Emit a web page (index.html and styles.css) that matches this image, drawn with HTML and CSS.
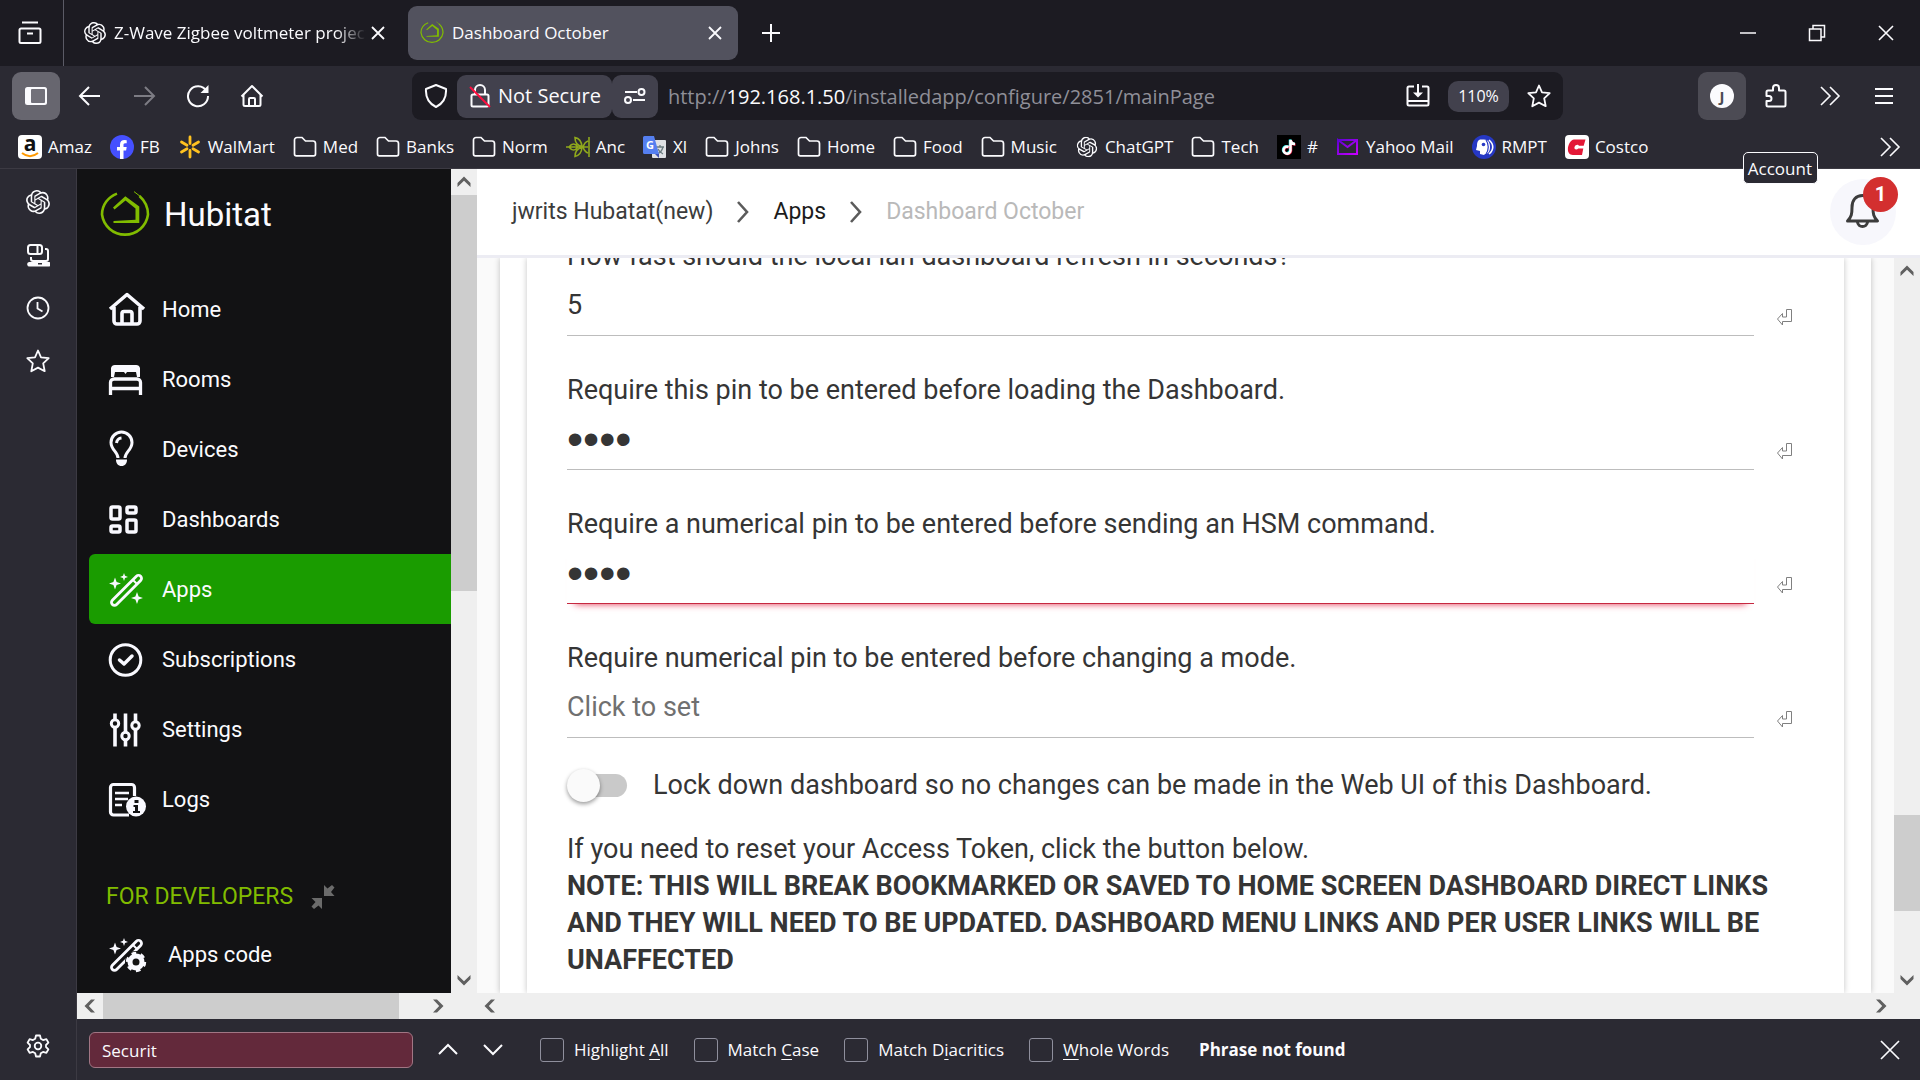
FILE: index.html
```html
<!DOCTYPE html>
<html lang="en">
<head>
<meta charset="utf-8">
<title>Dashboard October</title>
<link rel="stylesheet" href="styles.css">
</head>
<body>
<svg class="sprite" aria-hidden="true">
  <symbol id="gpt" viewBox="0 0 24 24"><path fill="currentColor" d="M22.2819 9.8211a5.9847 5.9847 0 0 0-.5157-4.9108 6.0462 6.0462 0 0 0-6.5098-2.9A6.0651 6.0651 0 0 0 4.9807 4.1818a5.9847 5.9847 0 0 0-3.9977 2.9 6.0462 6.0462 0 0 0 .7427 7.0966 5.98 5.98 0 0 0 .511 4.9107 6.051 6.051 0 0 0 6.5146 2.9001A5.9847 5.9847 0 0 0 13.2599 24a6.0557 6.0557 0 0 0 5.7718-4.2058 5.9894 5.9894 0 0 0 3.9977-2.9001 6.0557 6.0557 0 0 0-.7475-7.0729zm-9.022 12.6081a4.4755 4.4755 0 0 1-2.8764-1.0408l.1419-.0804 4.7783-2.7582a.7948.7948 0 0 0 .3927-.6813v-6.7369l2.02 1.1686a.071.071 0 0 1 .038.052v5.5826a4.504 4.504 0 0 1-4.4945 4.4944zm-9.6607-4.1254a4.4708 4.4708 0 0 1-.5346-3.0137l.142.0852 4.783 2.7582a.7712.7712 0 0 0 .7806 0l5.8428-3.3685v2.3324a.0804.0804 0 0 1-.0332.0615L9.74 19.9502a4.4992 4.4992 0 0 1-6.1408-1.6464zM2.3408 7.8956a4.485 4.485 0 0 1 2.3655-1.9728V11.6a.7664.7664 0 0 0 .3879.6765l5.8144 3.3543-2.0201 1.1685a.0757.0757 0 0 1-.071 0l-4.8303-2.7865A4.504 4.504 0 0 1 2.3408 7.872zm16.5963 3.8558L13.1038 8.364 15.1192 7.2a.0757.0757 0 0 1 .071 0l4.8303 2.7913a4.4944 4.4944 0 0 1-.6765 8.1042v-5.6772a.79.79 0 0 0-.407-.667zm2.0107-3.0231l-.142-.0852-4.7735-2.7818a.7759.7759 0 0 0-.7854 0L9.409 9.2297V6.8974a.0662.0662 0 0 1 .0284-.0615l4.8303-2.7866a4.4992 4.4992 0 0 1 6.6802 4.66zM8.3065 12.863l-2.02-1.1638a.0804.0804 0 0 1-.038-.0567V6.0742a4.4992 4.4992 0 0 1 7.3757-3.4537l-.142.0805L8.704 5.459a.7948.7948 0 0 0-.3927.6813zm1.0976-2.3654l2.602-1.4998 2.6069 1.4998v2.9994l-2.5974 1.4997-2.6067-1.4997Z"/></symbol>
  <symbol id="hub" viewBox="0 0 50 50"><path class="ln" stroke-width="2.6" d="M17 3.6C8 7 2 15 2 24.500a23.200 23.200 0 0 0 46 0c0-8-3.500-14-8.500-18.500"/><path class="ln" stroke-width="1" d="M34 1.600l6 4.600"/><path fill="currentColor" d="M13 17.500 25.300 6.200l14 10.200V33H13.500v-2l22-1.200V18.500L25.500 10.600 14.500 19.500z"/></symbol>
  <symbol id="folder" viewBox="0 0 24 24"><path class="ln" stroke-width="1.7" d="M1.500 19V5a2.500 2.500 0 0 1 2.500-2.500h5L12.500 6H20a2.500 2.500 0 0 1 2.500 2.500V19a1.800 1.800 0 0 1-1.800 1.800H3.300A1.800 1.800 0 0 1 1.500 19z"/></symbol>
  <symbol id="x" viewBox="0 0 24 24"><path class="ln" stroke-width="1.8" d="m6 6 12 12M18 6 6 18"/></symbol>
  <symbol id="star" viewBox="0 0 24 24"><path class="ln" stroke-width="1.800" stroke-linejoin="round" d="M12 1.500 15 8.300l7.700.8-5.500 5.200 1.500 7.900L12 18.600l-6.700 3.600 1.500-7.900L1.300 9.100 9 8.300z"/></symbol>
  <symbol id="more" viewBox="0 0 24 24"><path class="ln" stroke-width="1.600" d="m3 3 9 9-9 9M12 3l9 9-9 9"/></symbol>
  <symbol id="up" viewBox="0 0 26 26"><path fill="currentColor" d="M13 7.500 19.500 14v4L13 11.800 6.500 18v-4z"/></symbol>
  <symbol id="enter" viewBox="0 0 18 20"><path class="ln" stroke-width="1" d="M10.500 2.500h5v12h-9V18L1.500 12l5-5.500v3.500h4z"/></symbol>
  <symbol id="crumb" viewBox="0 0 14 24"><path class="ln" stroke-width="2.600" d="m2 2 9 10-9 10"/></symbol>
  <symbol id="wand" viewBox="0 0 42 42"><rect class="ln" stroke-width="2.800" x="-.5" y="18.300" width="40" height="6" rx="3" transform="rotate(-45 19.500 21.300)"/><path class="ln" stroke-width="2" d="m25.500 10.500 5 5"/><path fill="currentColor" d="M8 8.500l1.600 4.400L14 14.500l-4.400 1.600L8 20.500l-1.600-4.400L2 14.500l4.400-1.600zM17 4l1 2.800L21 8l-3 1-1 3-1-3-3-1 3-1.200z"/></symbol>
</svg>

<header class="chrome">
  <div class="tabs">
    <button class="tab-list" aria-label="View"><svg class="i24" viewBox="0 0 24 24"><path class="ln" stroke-width="2" d="M4 1.500h16M3 7.500h18a1.500 1.500 0 0 1 1.500 1.500v11.500A1.500 1.500 0 0 1 21 22H3a1.500 1.500 0 0 1-1.500-1.500V9A1.500 1.500 0 0 1 3 7.500zM9 12.500h6"/></svg></button>
    <div class="tab"><svg class="i22"><use href="#gpt"/></svg><span class="tab-title fade">Z-Wave Zigbee voltmeter project</span><button class="tab-close" aria-label="Close"><svg class="i24"><use href="#x"/></svg></button></div>
    <div class="tab active"><svg class="i24 green"><use href="#hub"/></svg><span class="tab-title">Dashboard October</span><button class="tab-close" aria-label="Close"><svg class="i24"><use href="#x"/></svg></button></div>
    <button class="new-tab" aria-label="New tab"><svg class="i24" viewBox="0 0 24 24"><path class="ln" stroke-width="2" d="M12 3v18M3 12h18"/></svg></button>
    <div class="window-buttons">
      <button aria-label="Minimize"><svg class="i24" viewBox="0 0 24 24"><path class="ln" stroke-width="1.500" d="M4 12h16"/></svg></button>
      <button aria-label="Restore"><svg class="i24" viewBox="0 0 24 24"><path class="ln" stroke-width="1.500" d="M4.500 8h11.500v11.500H4.500zM8 8V4.500h11.500V16H16"/></svg></button>
      <button aria-label="Close window"><svg class="i24" viewBox="0 0 24 24"><path class="ln" stroke-width="1.600" d="m5 5 14 14M19 5 5 19"/></svg></button>
    </div>
  </div>

  <nav class="toolbar">
    <button class="tool pressed" aria-label="Sidebar"><svg class="i24" viewBox="0 0 24 24"><rect x="1" y="3" width="22" height="18" rx="2.500" fill="#fbfbfe"/><rect x="7" y="5" width="14" height="14" rx="1" fill="#72717a"/></svg></button>
    <button class="tool" aria-label="Back"><svg class="i24" viewBox="0 0 24 24"><path class="ln" stroke-width="2" d="M22 12H2m9-9-9 9 9 9"/></svg></button>
    <button class="tool dim" aria-label="Forward"><svg class="i24" viewBox="0 0 24 24"><path class="ln" stroke-width="2" d="M2 12h20m-9-9 9 9-9 9"/></svg></button>
    <button class="tool" aria-label="Reload"><svg class="i24" viewBox="0 0 24 24"><path class="ln" stroke-width="2" d="M20.500 7A10 10 0 1 0 22 12"/><path fill="currentColor" d="M22.500 1v8h-8z"/></svg></button>
    <button class="tool" aria-label="Home"><svg class="i24" viewBox="0 0 24 24"><path class="ln" stroke-width="2" stroke-linejoin="round" d="M1.500 12.500 12 2l10.500 10.500M3.500 11v9.500A1.500 1.500 0 0 0 5 22h14a1.500 1.500 0 0 0 1.500-1.500V11M9 22v-7a1 1 0 0 1 1-1h4a1 1 0 0 1 1 1v7"/></svg></button>
    <div class="urlbar">
      <button class="shield" aria-label="Protections"><svg class="i24" viewBox="0 0 24 24"><path class="ln" stroke-width="2" stroke-linejoin="round" d="M12 1 22 5c.5 7-2 14-10 18C4 19 1.500 12 2 5z"/></svg></button>
      <button class="chip"><svg class="i24" viewBox="0 0 24 24"><path class="ln" stroke-width="2" d="M5 10.500h14a1.500 1.500 0 0 1 1.500 1.500v9a1.500 1.500 0 0 1-1.500 1.500H5A1.500 1.500 0 0 1 3.500 21v-9A1.500 1.500 0 0 1 5 10.500zM7 10V6a5 5 0 0 1 10 0v4"/><path stroke="#ff0f3f" stroke-width="2" d="m2 3 20 20"/></svg>Not Secure</button>
      <button class="chip" aria-label="Permissions"><svg class="i24" viewBox="0 0 24 24"><path class="ln" stroke-width="2" d="M2 8h12M10 16h12"/><circle class="ln" stroke-width="2" cx="18.500" cy="8" r="3"/><circle class="ln" stroke-width="2" cx="5" cy="16" r="3"/></svg></button>
      <div class="url" role="textbox" aria-label="Address" contenteditable="true">http://<b>192.168.1.50</b>/installedapp/configure/2851/mainPage</div>
      <button class="plain" aria-label="Install"><svg class="i24" viewBox="0 0 24 24"><path class="ln" stroke-width="2" d="M8 2.500H3A1.500 1.500 0 0 0 1.500 4v16A1.500 1.500 0 0 0 3 21.500h18a1.500 1.500 0 0 0 1.500-1.500V4A1.500 1.500 0 0 0 21 2.500h-5M1.500 17h21M12 0v10"/><path fill="currentColor" d="M7 8.500h10l-5 5z"/></svg></button>
      <button class="zoom">110%</button>
      <button class="plain" aria-label="Bookmark"><svg class="i24"><use href="#star"/></svg></button>
    </div>
    <div class="tools-end">
      <button class="tool hover"><span class="avatar">J</span></button>
      <button class="tool" aria-label="Extensions"><svg class="i24" viewBox="0 0 24 24"><path class="ln" stroke-width="2" stroke-linejoin="round" d="M2.500 12V8A1.500 1.500 0 0 1 4 6.500h5V4a3 3 0 0 1 6 0v2.500h5A1.500 1.500 0 0 1 21.500 8v13a1.500 1.500 0 0 1-1.500 1.500H4A1.500 1.500 0 0 1 2.500 21v-4H5a2.500 2.500 0 0 0 0-5z"/></svg></button>
      <button class="tool" aria-label="More tools"><svg class="i24"><use href="#more"/></svg></button>
      <button class="tool" aria-label="Menu"><svg class="i24" viewBox="0 0 24 24"><path class="ln" stroke-width="2" d="M3 5h18M3 12h18M3 19h18"/></svg></button>
    </div>
  </nav>
  <div class="tooltip">Account</div>

  <nav class="bookmarks">
    <a href="#"><svg class="i24" viewBox="0 0 24 24"><rect width="24" height="24" rx="4" fill="#fff"/><text x="12" y="16" text-anchor="middle" class="logo-text" font-size="21" fill="#111">a</text><path d="M4 18c5 4 11 4 16 0" fill="none" stroke="#f90" stroke-width="2"/></svg>Amaz</a>
    <a href="#"><svg class="i24" viewBox="0 0 24 24"><circle cx="12" cy="12" r="12" fill="#4550ff"/><path fill="#fff" d="M10 24v-8.500H7V12h3V9.500C10 6.300 12 5 14.500 5l2.200.2v3h-1.500c-1.400 0-1.700.8-1.700 1.800v2h3.200l-.6 3.500h-2.600V24z"/></svg>FB</a>
    <a href="#"><svg class="i24" viewBox="0 0 24 24"><path d="M12 2v6.500M12 15.500V22M3.500 7 9 10.200M15 13.800l5.500 3.200M3.500 17 9 13.800M15 10.200 20.500 7" stroke="#ffc220" stroke-width="2.800" stroke-linecap="round"/></svg>WalMart</a>
    <a href="#"><svg class="i24"><use href="#folder"/></svg>Med</a>
    <a href="#"><svg class="i24"><use href="#folder"/></svg>Banks</a>
    <a href="#"><svg class="i24"><use href="#folder"/></svg>Norm</a>
    <a href="#"><svg class="i24 leaf" viewBox="0 0 24 24"><path class="ln" stroke-width="1.600" d="M23 2v20M0 12h22M3 12c3-4 6-4 9 0-3 4-6 4-9 0zM9 2.500c5 1 6.500 4 7 9-5-1-7-4-7-9zm0 19c5-1 6.500-4 7-9-5 1-7 4-7 9zM22 6c-3 1-4 3-5 6 1 3 2 5 5 6"/></svg>Anc</a>
    <a href="#"><svg class="i24" viewBox="0 0 24 24"><rect x="9" y="5" width="14" height="18" rx="1" fill="#dfe1e5"/><path d="M13 12h8m-4-2v2m3 0c-1 4-3 6-6 7m1-5c1 2 3 4 5 5" stroke="#6b7c80" stroke-width="1.300" fill="none"/><path fill="#557ff0" d="M1.500 1H11l5 18H1.500A1.500 1.500 0 0 1 0 17.500v-15A1.500 1.500 0 0 1 1.500 1z"/><path fill="#3f50b0" d="m12 19 4 4v-4z"/><text x="7" y="14" text-anchor="middle" class="logo-text" font-size="11" fill="#fff">G</text></svg>Xl</a>
    <a href="#"><svg class="i24"><use href="#folder"/></svg>Johns</a>
    <a href="#"><svg class="i24"><use href="#folder"/></svg>Home</a>
    <a href="#"><svg class="i24"><use href="#folder"/></svg>Food</a>
    <a href="#"><svg class="i24"><use href="#folder"/></svg>Music</a>
    <a href="#"><svg class="i24" viewBox="-2 -2 28 28"><use href="#gpt" width="24" height="24"/></svg>ChatGPT</a>
    <a href="#"><svg class="i24"><use href="#folder"/></svg>Tech</a>
    <a href="#"><svg class="i24" viewBox="0 0 24 24"><rect width="24" height="24" fill="#000"/><g fill="none" stroke-width="2.500"><path stroke="#25f4ee" d="M11 11.500a3.500 3.500 0 1 0 2 3.500V4.500c.5 2.500 2 4 4.500 4"/><path stroke="#fe2c55" d="M12.500 12.500a3.500 3.500 0 1 0 1.500 3.500V5.500c.5 2.500 2 4 4.500 4"/><path stroke="#fff" d="M11.500 12a3.500 3.500 0 1 0 2 3.500V5c.5 2.500 2 4 4.500 4"/></g></svg>#</a>
    <a href="#"><svg class="i24" viewBox="0 0 24 24"><defs><linearGradient id="ym" x2="1" y2="1"><stop stop-color="#6001d2"/><stop offset="1" stop-color="#c800ff"/></linearGradient></defs><path fill="none" stroke="url(#ym)" stroke-width="2" d="M2 5h19v14H2V5l9.500 7L21 5"/></svg>Yahoo Mail</a>
    <a href="#"><svg class="i24" viewBox="0 0 24 24"><circle cx="12" cy="12" r="12" fill="#2638c4"/><path fill="#fff" d="M9 4.500h3c4 0 6 3 6 7.500s-2 7-5 7l-1 1-4-1v-3l-4-1 1-4C5 7 6 4.500 9 4.500z"/><circle cx="11.500" cy="9.500" r="1.800" fill="#2638c4"/><path fill="none" stroke="#2638c4" stroke-width="1.200" d="M14 5c3 4 3 10 0 14"/><path fill="none" stroke="#fff" stroke-width="1.600" d="M17 5c5 4 5 10 0 14"/></svg>RMPT</a>
    <a href="#"><svg class="i24" viewBox="0 0 24 24"><rect width="24" height="24" rx="4" fill="#fff"/><path fill="#e31837" d="M9 4.500h11.500l-1.800 6.200h-5c.3-1.500-3.500-1.400-4.200 1.500-.6 2.700 2.500 2.900 3.800 1.200h5L17 20H8c-9-.5-4.500-15 1-15.500z"/></svg>Costco</a>
    <button class="overflow" aria-label="More bookmarks"><svg class="i24"><use href="#more"/></svg></button>
  </nav>
</header>

<div class="body">
  <aside class="strip">
    <button aria-label="ChatGPT"><svg class="i24"><use href="#gpt"/></svg></button>
    <button aria-label="Synced tabs"><svg class="i24" viewBox="0 0 24 24"><rect class="ln" stroke-width="2" x="2" y="2" width="14" height="9" rx="2.500"/><path class="ln" stroke-width="2" d="M11.500 2v9M19 6h1a2 2 0 0 1 2 2v8a2 2 0 0 1-2 2H7a2 2 0 0 1-2-2v-2"/><path fill="currentColor" d="M3 19h20a1.500 1.500 0 0 1 0 4.500H4A2.200 2.200 0 0 1 3 19z"/><rect x="12" y="20" width="4" height="1.500" fill="#2b2a33"/></svg></button>
    <button aria-label="History"><svg class="i24" viewBox="0 0 24 24"><circle class="ln" stroke-width="1.800" cx="12" cy="12" r="10.500"/><path class="ln" stroke-width="1.800" d="M11.500 6v6.500l5 3"/></svg></button>
    <button aria-label="Bookmarks"><svg class="i24"><use href="#star"/></svg></button>
    <button class="gear" aria-label="Settings"><svg class="i24" viewBox="0 0 24 24"><path class="ln" stroke-width="1.800" stroke-linejoin="round" d="M10 1.500h4l.8 3.300 2.200 1.300 3.400-1 2 3.600L20 11v2l2.400 2.300-2 3.600-3.400-1-2.200 1.300-.8 3.300h-4l-.8-3.300L7 17.900l-3.400 1-2-3.600L4 13v-2L1.600 8.700l2-3.600 3.400 1 2.200-1.300z"/><circle class="ln" stroke-width="1.800" cx="12" cy="12" r="3.300"/></svg></button>
  </aside>

  <div class="stage">
    <div class="page">
      <div class="menu-frame">
        <nav class="menu">
          <a class="brand" href="#"><svg class="i50"><use href="#hub"/></svg><span>Hubitat</span></a>
          <a class="item" href="#"><svg class="i42" viewBox="0 0 42 42"><path class="ln" stroke-width="3.600" stroke-linejoin="round" d="M3 20 20 5.500 37 20M7 18v14a3 3 0 0 0 3 3h20a3 3 0 0 0 3-3V18M15 35V24.500a2 2 0 0 1 2-2h6a2 2 0 0 1 2 2V35"/></svg>Home</a>
          <a class="item" href="#"><svg class="i42" viewBox="0 0 42 42"><path fill="currentColor" d="M4 18V9a4 4 0 0 1 4-3h21a4 4 0 0 1 4 3v9h-3l-1-5h-9l-1.500 2L17 13H8l-1 5z"/><path class="ln" stroke-width="3.300" d="M3.500 36V23.500a3.500 3.500 0 0 1 3.500-3.500h23a3.500 3.500 0 0 1 3.500 3.500V36M3.500 29.500h30"/></svg>Rooms</a>
          <a class="item" href="#"><svg class="i42" viewBox="0 0 42 42"><path class="ln" stroke-width="3" d="M11 29c0-6-7-8-7-15.500a10.500 10.500 0 0 1 21 0C25 21 18 23 18 29M9.500 14a5.500 5.500 0 0 1 5-5"/><path fill="currentColor" d="M9 30.500h11c0 4-2 6.500-5.500 6.500S9 34.500 9 30.500z"/></svg>Devices</a>
          <a class="item" href="#"><svg class="i42" viewBox="0 0 42 42"><g class="ln" stroke-width="3.500"><rect x="4" y="8" width="9" height="12" rx="1.500"/><rect x="20" y="8" width="9" height="6" rx="1.500"/><rect x="4" y="27" width="9" height="6" rx="1.500"/><rect x="20" y="21" width="9" height="12" rx="1.500"/></g></svg>Dashboards</a>
          <a class="item current" href="#"><svg class="i42" viewBox="0 0 42 42"><use href="#wand" width="42" height="42"/><path fill="currentColor" d="m30 23 1.600 4.400L36 29l-4.400 1.600L30 35l-1.600-4.400L24 29l4.400-1.600z"/></svg>Apps</a>
          <a class="item" href="#"><svg class="i42" viewBox="0 0 42 42"><circle class="ln" stroke-width="3" cx="18.500" cy="21" r="15.300"/><path class="ln" stroke-width="3.500" stroke-linecap="round" stroke-linejoin="round" d="m12.500 21 4.500 4 8-8"/></svg>Subscriptions</a>
          <a class="item" href="#"><svg class="i42" viewBox="0 0 42 42"><path class="ln" stroke-width="3.600" d="M8 4.500v7M8 18v19.500M18.500 4.500V24M18.500 31v6.500M28.500 4.500V13M28.500 20v17.500"/><g class="ln" stroke-width="3"><circle cx="8" cy="14.500" r="3.700"/><circle cx="18.500" cy="27" r="3.700"/><circle cx="28.500" cy="16.500" r="3.700"/></g></svg>Settings</a>
          <a class="item" href="#"><svg class="i42" viewBox="0 0 42 42"><path class="ln" stroke-width="3.200" d="M22 36H6.500A3 3 0 0 1 3.500 33V8.500a3 3 0 0 1 3-3h18a3 3 0 0 1 3 3V17"/><path class="ln" stroke-width="2.600" d="M8 14h14M8 20h13M8 26h7"/><circle cx="29" cy="27.500" r="10" fill="currentColor"/><path fill="#121214" d="M27.500 21h4v3h-4zM26.500 26h4.500v6H33v2h-7v-2h2v-4h-1.500z"/></svg>Logs</a>
          <div class="section">FOR DEVELOPERS<svg class="i24" viewBox="0 0 24 24"><path fill="#6b6b6b" d="M13 11V0l3.500 3.500L21 0l2.500 2.500L20 7l3.500 4zM11 13v11l-3.500-3.500L3 24 .5 21.500 4.500 17 .5 13z"/></svg></div>
          <a class="item sub" href="#"><svg class="i42" viewBox="0 0 42 42"><use href="#wand" width="42" height="42"/><circle cx="29" cy="28" r="11" fill="#121214"/><circle cx="29" cy="28" r="6" fill="none" stroke="currentColor" stroke-width="5"/><circle cx="29" cy="28" r="8.700" fill="none" stroke="currentColor" stroke-width="3" stroke-dasharray="4.500 4.600"/></svg>Apps code</a>
        </nav>
        <div class="vbar"><svg class="i26"><use href="#up"/></svg><i class="thumb menu-thumb"></i><svg class="i26 flip"><use href="#up"/></svg></div>
        <div class="hbar"><svg class="i26 left"><use href="#up"/></svg><i class="thumb wide-thumb"></i><svg class="i26 right"><use href="#up"/></svg></div>
      </div>

      <div class="main-frame">
        <header class="crumbs">
          <a href="#">jwrits Hubatat(new)</a><svg class="sep"><use href="#crumb"/></svg><a class="dark" href="#">Apps</a><svg class="sep"><use href="#crumb"/></svg><span class="here">Dashboard October</span>
          <button class="bell" aria-label="Alerts"><svg class="i42" viewBox="0 0 42 42"><path class="ln" stroke-width="3" stroke-linejoin="round" d="M5.500 30c4-4 4.500-7 4.500-13.500C10 9 14 4.500 20.500 4.500S31 9 31 16.500C31 23 31.500 26 35.500 30z"/><path class="ln" stroke-width="3" d="M15.500 31c.5 6 9.500 6 10 0"/></svg><span class="badge">1</span></button>
        </header>
        <div class="scroller">
          <div class="card"><div class="card inner">
            <div class="field"><label for="refresh">How fast should the local lan dashboard refresh in seconds?</label><input id="refresh" type="text" value="5"><button aria-label="Submit"><svg class="enter"><use href="#enter"/></svg></button></div>
            <div class="field"><label for="pin">Require this pin to be entered before loading the Dashboard.</label><input id="pin" type="password" placeholder=" " value="1234"><button aria-label="Submit"><svg class="enter"><use href="#enter"/></svg></button></div>
            <div class="field focus"><label for="hsm">Require a numerical pin to be entered before sending an HSM command.</label><input id="hsm" type="password" placeholder=" " value="1234"><button aria-label="Submit"><svg class="enter"><use href="#enter"/></svg></button></div>
            <div class="field"><label for="mode">Require numerical pin to be entered before changing a mode.</label><input id="mode" type="password" placeholder="Click to set"><button aria-label="Submit"><svg class="enter"><use href="#enter"/></svg></button></div>
            <label class="switch"><input type="checkbox">Lock down dashboard so no changes can be made in the Web UI of this Dashboard.</label>
            <p>If you need to reset your Access Token, click the button below.<br><strong>NOTE: THIS WILL BREAK BOOKMARKED OR SAVED TO HOME SCREEN DASHBOARD DIRECT LINKS AND THEY WILL NEED TO BE UPDATED. DASHBOARD MENU LINKS AND PER USER LINKS WILL BE UNAFFECTED</strong></p>
          </div></div>
        </div>
        <div class="vbar"><svg class="i26"><use href="#up"/></svg><i class="thumb main-thumb"></i><svg class="i26 flip"><use href="#up"/></svg></div>
        <div class="hbar"><svg class="i26 left"><use href="#up"/></svg><svg class="i26 right"><use href="#up"/></svg></div>
      </div>
    </div>

    <form class="find">
      <input type="text" value="Securit" aria-label="Find in page">
      <button type="button" aria-label="Previous"><svg class="i24" viewBox="0 0 24 24"><path class="ln" stroke-width="2" d="m3 16 9-9 9 9"/></svg></button>
      <button type="button" aria-label="Next"><svg class="i24" viewBox="0 0 24 24"><path class="ln" stroke-width="2" d="m3 7 9 9 9-9"/></svg></button>
      <label><input type="checkbox"><span>Highlight <u>A</u>ll</span></label>
      <label><input type="checkbox"><span>Match <u>C</u>ase</span></label>
      <label><input type="checkbox"><span>Match D<u>i</u>acritics</span></label>
      <label><input type="checkbox"><span><u>W</u>hole Words</span></label>
      <strong>Phrase not found</strong>
      <button type="button" class="close" aria-label="Close find bar"><svg class="i24" viewBox="0 0 24 24"><path class="ln" stroke-width="1.700" d="m3 3 18 18M21 3 3 21"/></svg></button>
    </form>
  </div>
</div>
</body>
</html>
```
FILE: styles.css
```css
* { box-sizing: border-box; }
body {
  margin: 0;
  height: 100vh;
  display: flex;
  flex-direction: column;
  overflow: hidden;
  background: #2b2a33;
  color: #fbfbfe;
  font: 17px/24px "Open Sans", "Noto Sans", sans-serif;
}
button, input { font: inherit; color: inherit; }
button { display: flex; align-items: center; justify-content: center; padding: 0; border: 0; background: none; }
a { color: inherit; text-decoration: none; }
svg { display: block; flex: none; }
.sprite { width: 0; height: 0; position: absolute; }
.ln { fill: none; stroke: currentColor; }
.i22 { width: 22px; height: 22px; }
.i24 { width: 24px; height: 24px; }
.i26 { width: 26px; height: 26px; }
.i42 { width: 42px; height: 42px; }
.i50 { width: 50px; height: 50px; }
.logo-text { font-family: "Open Sans", sans-serif; font-weight: 700; }

/* browser chrome */
.chrome { position: relative; flex: none; border-bottom: 1px solid #3c3a43; }
.tabs { display: flex; height: 66px; background: #1c1b22; }
.tab-list { width: 64px; border-right: 1px solid #5b5b66; padding-right: 4px; }
.tab { display: flex; align-items: center; gap: 8px; width: 330px; height: 54px; margin: 6px 0 0 8px; padding: 0 12px; border-radius: 9px; }
.tab.active { margin-left: 6px; padding-right: 11px; background: #52525e; }
.tab-title { flex: 1; min-width: 0; overflow: hidden; white-space: nowrap; }
.fade { margin-right: -8px; -webkit-mask-image: linear-gradient(90deg, #000 88%, transparent); mask-image: linear-gradient(90deg, #000 88%, transparent); }
.green { color: #81bc00; }
.new-tab { width: 66px; }
.window-buttons { display: flex; margin-left: auto; }
.window-buttons button { width: 69px; }
.toolbar { display: flex; align-items: center; gap: 6px; height: 60px; padding: 0 12px; }
.tool { width: 48px; height: 48px; border-radius: 9px; }
.pressed { background: #67666f; }
.hover { background: #4c4b54; }
.dim { color: #7d7c84; }
.urlbar { display: flex; align-items: center; flex: 1; height: 48px; margin: 0 129px 0 130px; padding: 0 0 0 6px; border-radius: 9px; background: #1c1b22; }
.shield { width: 36px; margin-right: 3px; }
.chip { height: 43px; padding: 0 11px; gap: 6px; border-radius: 9px; background: #42414d; font-size: 20px; }
.url { flex: 1; padding: 1px 10px 0; font-size: 20px; line-height: 28px; white-space: nowrap; overflow: hidden; color: #8f8f98; }
.url b { font-weight: 400; color: #fbfbfe; }
.plain { width: 48px; height: 48px; }
.zoom { height: 31px; width: 61px; margin: 0 6px; border-radius: 10px; background: #42414d; font-size: 16px; }
.tools-end { display: flex; gap: 6px; }
.avatar { width: 24px; height: 24px; border-radius: 50%; background: #fbfbfe; color: #4c4b54; font-size: 15px; font-weight: 700; }
.tooltip { position: absolute; z-index: 2; right: 102px; bottom: -16px; padding: 3px 5px 1px 4px; border: 1px solid #fbfbfe; border-radius: 5px; background: #2b2a33; line-height: 26px; }
.bookmarks { display: flex; align-items: center; gap: 18px; height: 42px; padding: 0 18px; }
.bookmarks a { display: flex; align-items: center; gap: 6px; white-space: nowrap; }
.leaf { color: #8fa81c; }
.overflow { margin-left: auto; }

/* body */
.body { flex: 1; display: flex; min-height: 0; }
.strip { width: 77px; display: flex; flex-direction: column; align-items: center; gap: 29px; padding: 21px 1px 22px 0; border-right: 1px solid #3c3a43; }
.gear { margin-top: auto; }
.stage { flex: 1; min-width: 0; display: flex; flex-direction: column; font-family: Roboto, sans-serif; }
.page { flex: 1; min-height: 0; display: flex; }

.menu-frame { flex: none; display: grid; grid-template: minmax(0, 1fr) 26px / 374px 26px; }
.menu { overflow: hidden; background: #121214; font-size: 22px; line-height: 30px; }
.brand { display: flex; align-items: center; gap: 14px; height: 92px; padding-left: 23px; margin-bottom: 13px; font-size: 33px; }
.brand svg { color: #81bc00; }
.item { display: flex; align-items: center; gap: 13px; height: 70px; margin-left: 12px; padding: 1px 0 0 18px; border-radius: 6px 0 0 6px; }
.item svg { color: #f9f9ff; }
.current { background: #1a9c00; }
.section { display: flex; align-items: center; gap: 18px; padding-left: 29px; margin-top: 48px; color: #81bc00; font-size: 23px; }
.sub { height: 60px; margin-top: 12px; gap: 19px; }

.vbar, .hbar { display: flex; background: #efefef; color: #606060; }
.vbar { flex-direction: column; justify-content: space-between; }
.hbar { grid-column: 1 / -1; justify-content: space-between; padding-right: 26px; }
.thumb { background: #cdcdcd; }
.menu-thumb { height: 396px; margin-bottom: auto; }
.wide-thumb { width: 296px; margin-right: auto; }
.main-thumb { height: 96px; margin: auto 0 56px; }
.flip { transform: rotate(180deg); }
.left { transform: rotate(-90deg); }
.right { transform: rotate(90deg); }

.main-frame { flex: 1; min-width: 0; display: grid; grid-template: 89px minmax(0, 1fr) 26px / minmax(0, 1fr) 26px; background: #fafafa; color: #353535; }
.crumbs { grid-column: 1 / -1; display: flex; align-items: center; gap: 23px; padding: 0 24px 0 35px; border-bottom: 3px solid #ececf3; background: #fff; color: #3c3c3c; font-size: 23px; }
.sep { width: 14px; height: 24px; color: #5b5b5b; }
.dark { color: #1c1c1c; }
.here { color: #b9b9b9; }
.bell { position: relative; width: 66px; height: 66px; margin-left: auto; border-radius: 50%; background: #f7f7fc; }
.badge { position: absolute; top: -2px; right: -2px; width: 35px; height: 35px; border-radius: 50%; background: #d32f2f; color: #fff; font-size: 20px; font-weight: 700; line-height: 35px; }
.scroller { overflow: hidden; padding: 0 23px; }
.card { height: 100%; padding: 0 27px; background: #fff; box-shadow: 0 0 6px rgba(0, 0, 0, .24); }
.inner { padding: 1px 40px; font-size: 27px; line-height: 38px; }
.field { display: grid; grid-template-columns: 1fr 50px; padding-top: 35px; }
.field:first-child { margin-top: -57px; }
.field label { grid-column: 1 / -1; }
.field input { width: 100%; height: 61px; padding: 0; border: 0; border-bottom: 1px solid #bdbdbd; background: #fff; outline: 0; }
.field ::placeholder { color: #707070; opacity: 1; }
.field input[type="password"]:not(:placeholder-shown) { font: 46px/60px "Liberation Sans", sans-serif; }
.field.focus input { border-color: #c62840; box-shadow: 0 8px 7px -8px #e3334f; }
.enter { width: 18px; height: 20px; color: #808080; }
.field button { padding: 22px 0 0 11px; }
.switch { display: flex; align-items: center; gap: 26px; margin-top: 28px; }
.switch input { appearance: none; display: flex; align-items: center; width: 58px; height: 23px; margin: 0 0 0 2px; border-radius: 12px; background: #c9c9c9; }
.switch input::before { content: ""; width: 33px; height: 33px; margin-left: -2px; flex: none; border-radius: 50%; background: #fafafa; box-shadow: 0 2px 4px rgba(0, 0, 0, .4); }
p { margin: 27px 0 0; line-height: 37px; }
strong { font-weight: 700; }

.find { flex: none; display: flex; align-items: center; height: 61px; padding: 1px 18px 0 12px; font: 17px/24px "Open Sans", sans-serif; }
.find > input { width: 324px; height: 36px; padding: 0 12px; margin-right: 12px; border: 1px solid #a17684; border-radius: 6px; background: #63293b; outline: 0; }
.find > button { width: 45px; height: 36px; }
.find label { display: flex; align-items: center; gap: 10px; margin-left: 25px; }
.find label input { appearance: none; width: 24px; height: 24px; margin: 0; border: 1px solid #8f8f9d; border-radius: 3px; }
.find u { text-underline-offset: 3px; }
.find strong { margin-left: 30px; }
.find .close { width: 24px; margin-left: auto; }
```
